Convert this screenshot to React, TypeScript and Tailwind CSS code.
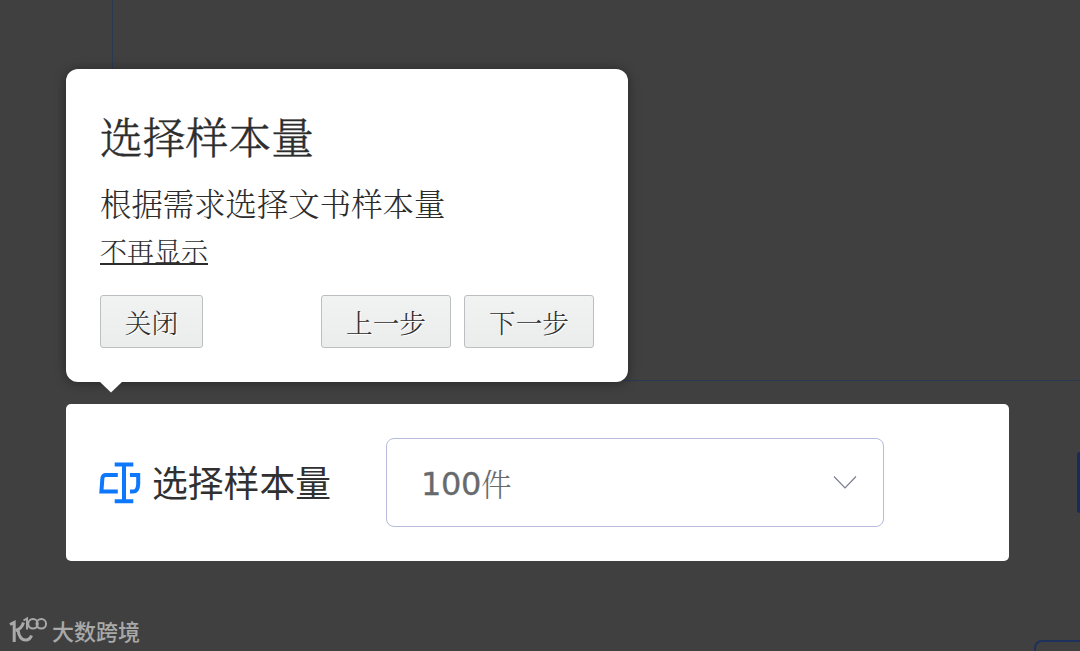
import React from "react";

const song = "font-['Noto_Serif_CJK_SC','Noto_Sans_CJK_SC',serif]";

function StepButton({ label, width }: { label: string; width: string }) {
  return (
    <button
      className={`${width} flex h-[53px] items-center justify-center rounded-[3px] border border-[#bcbfc1] bg-linear-to-b from-[#f1f2f2] to-[#ebecec] pt-[1px] text-[26.7px] leading-none font-light text-[#2d2d2d] [text-shadow:1px_1px_0_#fff]`}
    >
      {label}
    </button>
  );
}

function TourPopover() {
  return (
    <div
      className={`absolute top-[69px] left-[66px] flex h-[313px] w-[562px] flex-col rounded-[12px] bg-white px-[34px] text-[#2d2d2d] shadow-[0_1px_12px_rgba(0,0,0,0.4)] ${song}`}
    >
      <h1 className="mt-[42px] h-[50px] text-[42.8px] leading-[50px] font-light whitespace-nowrap [-webkit-text-stroke:0.35px_#2d2d2d]">
        选择样本量
      </h1>
      <p className="mt-[22px] h-[40px] text-[31.4px] leading-[40px] font-light whitespace-nowrap">
        根据需求选择文书样本量
      </p>
      <a className="mt-[14px] flex h-[28px] w-[108px] items-center border-b-2 border-[#2d2d2d] text-[27px] leading-[27px] font-light whitespace-nowrap">
        不再显示
      </a>
      <div className="mt-[30px] flex">
        <StepButton label="关闭" width="w-[103px]" />
        <div className="ml-auto flex gap-[13px]">
          <StepButton label="上一步" width="w-[130px]" />
          <StepButton label="下一步" width="w-[130px]" />
        </div>
      </div>
      <svg className="absolute top-[312px] left-[33px]" width="24" height="12" viewBox="0 0 24 12">
        <path d="M0 0H24L12 11.5Z" fill="#fff" />
      </svg>
    </div>
  );
}

function SampleIcon() {
  return (
    <svg width="42" height="42" viewBox="0 0 42 42" fill="none" stroke="#0d78fb" strokeWidth="4">
      <path d="M15.7 2.5H34.3M15.7 39.3H34.3M25 2.5V39.3" strokeWidth="4" />
      <path d="M18.8 13H7Q3.9 13 3.4 16L2.4 29.6H18.8" strokeWidth="4" />
      <path d="M31 13H39.2V22Q39 29.6 34 29.6H31" strokeWidth="4" />
    </svg>
  );
}

function Watermark() {
  return (
    <div className="absolute top-[614px] left-[9px] flex items-start text-[#a9a9a9]">
      <svg width="39" height="29" viewBox="0 0 39 29" fill="none" stroke="currentColor">
        <path d="M1 10.5L5.2 8.5V28" strokeWidth="3" />
        <path d="M14.5 8.5C13.5 12 10.5 15.5 6.5 16.5M9 16C10 23 13 26 16.5 26C19.5 26 21.5 24.5 22.5 21.5" strokeWidth="3" />
        <path d="M14.5 6.5L18 4.5V15.5" strokeWidth="2" />
        <circle cx="24" cy="9.8" r="4.8" strokeWidth="2" />
        <circle cx="32.3" cy="9.8" r="4.8" strokeWidth="2" />
      </svg>
      <span className="ml-[4px] pt-[2px] font-['Noto_Sans_CJK_SC',sans-serif] text-[22px] leading-[28px] font-medium whitespace-nowrap">
        大数跨境
      </span>
    </div>
  );
}

export default function App() {
  return (
    <div className="relative flex h-[651px] w-[1080px] flex-col overflow-hidden bg-[#404040]">
      <div className="ml-[112px] h-[381px] shrink-0 border-b border-l border-[#2b3a52]" />
      <div className="mt-[23px] flex shrink-0 items-center justify-between">
        <section className="ml-[66px] flex h-[157px] w-[943px] items-center rounded-[5px] bg-white pl-[33px]">
          <SampleIcon />
          <h2 className="ml-[11px] w-[234px] pb-[4px] font-['Noto_Sans_CJK_SC',sans-serif] text-[35.8px] leading-[40px] font-normal whitespace-nowrap text-[#303030]">
            选择样本量
          </h2>
          <div className="flex h-[89px] w-[498px] items-center justify-between rounded-[8px] border border-[#b4bbdc] pr-[26px] pl-[34px]">
            <span className="flex items-center text-[#666a6d]">
              <span className="pt-[2px] font-['DejaVu_Sans',sans-serif] text-[32px] leading-[40px] tracking-[-0.4px] [-webkit-text-stroke:0.3px_#666a6d]">
                100
              </span>
              <span className={`${song} text-[30.5px] leading-[40px] font-light`}>件</span>
            </span>
            <svg width="24" height="14" viewBox="0 0 24 14" fill="none" stroke="#777b8b" strokeWidth="1.1">
              <path d="M1 0.5L12 12L23 0.5" />
            </svg>
          </div>
        </section>
        <div className="h-[61px] w-[3px] rounded-l-[3px] bg-[#172b5c]" />
      </div>
      <div className="mt-[79px] ml-auto h-[40px] w-[46px] shrink-0 rounded-tl-[8px] border-t-2 border-l-2 border-[#1d315c]" />
      <TourPopover />
      <Watermark />
    </div>
  );
}
